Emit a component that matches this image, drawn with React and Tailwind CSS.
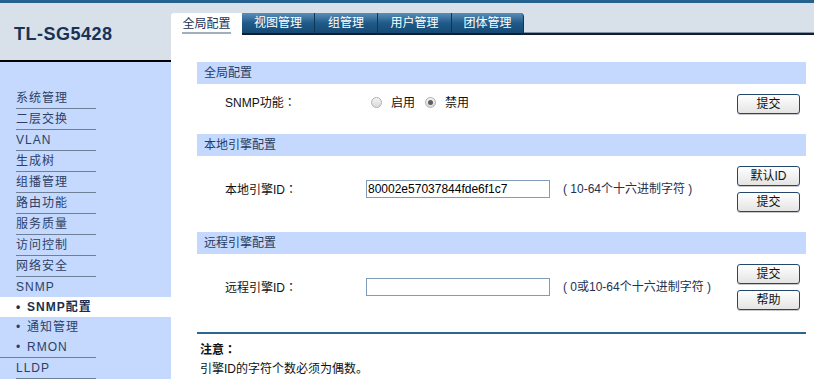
const FONT = "font-['Liberation_Sans','Noto_Sans_CJK_SC',sans-serif]"

const menu = [
  { label: '系统管理' },
  { label: '二层交换' },
  { label: 'VLAN' },
  { label: '生成树' },
  { label: '组播管理' },
  { label: '路由功能' },
  { label: '服务质量' },
  { label: '访问控制' },
  { label: '网络安全' },
  { label: 'SNMP', noLine: true },
  { label: 'SNMP配置', sub: true, active: true },
  { label: '通知管理', sub: true },
  { label: 'RMON', sub: true, line: true },
  { label: 'LLDP' },
]

const tabs = [
  { label: '视图管理', w: 'w-[73px]' },
  { label: '组管理', w: 'w-[63px]' },
  { label: '用户管理', w: 'w-[74px]' },
  { label: '团体管理', w: 'w-[72px] rounded-tr-[4px]' },
]

function Button({ children }) {
  return (
    <button className="w-[63px] h-[20px] border border-[#24476d] rounded-[3px] bg-linear-to-b from-white to-[#e4e4e4] text-[12px] leading-[18px] text-[#111] shadow-[0_1px_0_#c8c8c8]">
      {children}
    </button>
  )
}

function Radio({ checked }) {
  return (
    <span className="w-[11px] h-[11px] rounded-full border border-[#b0b0b0] bg-linear-to-b from-[#f4f4f4] to-[#dadada] flex items-center justify-center">
      {checked && <span className="w-[5px] h-[5px] rounded-full bg-[#5e5e5e]" />}
    </span>
  )
}

// full-width colon centred, as in the reference
function Colon() {
  return <span className="font-['Noto_Sans_CJK_TC',sans-serif]">：</span>
}

function SectionBar({ title }) {
  return (
    <div className="h-[22px] bg-[#c4d9fd] pl-[7px] text-[12px] leading-[22px] text-[#2b3c5e]">
      {title}
    </div>
  )
}

function SidebarItem({ item }) {
  if (item.sub) {
    return (
      <div
        className={`h-[20px] flex items-center pl-[16px] text-[12px] tracking-[1px] ${
          item.active ? 'bg-white font-bold text-[#1c2e4f]' : 'text-[#2e3f66]'
        }`}
      >
        <span className="w-[80px] flex items-center">
          <span className="w-[11px]">•</span>
          <span>{item.label}</span>
        </span>
      </div>
    )
  }
  return (
    <div className="pl-[16px]">
      <div
        className={`w-[80px] h-[20px] leading-[20px] text-[12px] tracking-[1px] text-[#2e3f66] ${
          item.noLine ? '' : 'box-content border-b border-[#6e7f98]'
        }`}
      >
        {item.label}
      </div>
    </div>
  )
}

export default function App() {
  return (
    <div className={`w-[814px] h-[379px] overflow-hidden flex flex-col bg-white ${FONT}`}>
      <div className="h-[3px] bg-[#25618f]" />
      <div className="flex flex-1 min-h-0">
        {/* sidebar */}
        <aside className="w-[171px] flex flex-col">
          <div className="h-[54px] bg-[#d8e0ea] flex items-center pl-[14px] pt-[6px] border-b-2 border-black box-content">
            <span className="text-[18px] font-bold tracking-[0.5px] text-[#1a3256]">TL-SG5428</span>
          </div>
          <div className="flex-1 bg-[#c4d9fd] pt-[26px]">
            {menu.map((m) => (
              <div key={m.label} className={m.line ? 'border-b border-[#6e7f98] w-[96px] box-content' : ''}>
                <SidebarItem item={m} />
              </div>
            ))}
          </div>
        </aside>

        {/* main */}
        <main className="flex-1 flex flex-col">
          <div className="h-[34px] bg-[#d8e0ea] flex items-end">
            <div className="w-[71px] h-[22px] bg-white rounded-tl-[3px] flex justify-center">
              <span className="mt-[4px] h-[17px] text-[12px] leading-[14px] text-[#1c3558] border-b-2 border-[#a4afbd]">全局配置</span>
            </div>
            {tabs.map((t) => (
              <div
                key={t.label}
                className={`${t.w} h-[22px] bg-linear-to-b from-[#5a8fba] via-[#1f5a88] to-[#164a74] border-r border-[#0f3658] border-b-2 border-b-[#0f1f2f] flex items-center justify-center text-[12px] text-white`}
              >
                {t.label}
              </div>
            ))}
            <div className="flex-1 h-[3px] border-t border-[#8594a5] bg-[#0f1f2f]" />
          </div>

          <div className="flex-1 pl-[26px] pr-[8px] pt-[27px] text-[12px] leading-[16px] text-[#111]">
            <SectionBar title="全局配置" />
            <div className="flex items-center pt-[10px] pb-[20px]">
              <div className="w-[169px] pl-[28px] pb-[3px]">SNMP功能<Colon /></div>
              <div className="flex items-center pl-[5px] pb-[3px] flex-1">
                <Radio />
                <span className="ml-[9px]">启用</span>
                <span className="ml-[10px]"><Radio checked /></span>
                <span className="ml-[9px]">禁用</span>
              </div>
              <Button>提交</Button>
              <div className="w-[6px]" />
            </div>

            <SectionBar title="本地引擎配置" />
            <div className="flex items-center pt-[10px] pb-[20px]">
              <div className="w-[169px] pl-[28px]">本地引擎ID<Colon /></div>
              <div className="w-[197px]">
                <input
                  readOnly
                  value="80002e57037844fde6f1c7"
                  className="w-[184px] h-[18px] border border-[#7f9cba] px-[1px] text-[12px] text-black outline-none"
                />
              </div>
              <div className="flex-1 text-[#1e3150]">( 10-64个十六进制字符 )</div>
              <div className="flex flex-col gap-[6px]">
                <Button>默认ID</Button>
                <Button>提交</Button>
              </div>
              <div className="w-[6px]" />
            </div>

            <SectionBar title="远程引擎配置" />
            <div className="flex items-center pt-[10px] pb-[22px]">
              <div className="w-[169px] pl-[28px]">远程引擎ID<Colon /></div>
              <div className="w-[197px]">
                <input
                  readOnly
                  value=""
                  className="w-[184px] h-[18px] border border-[#7f9cba] px-[1px] text-[12px] text-black outline-none"
                />
              </div>
              <div className="flex-1 text-[#1e3150]">( 0或10-64个十六进制字符 )</div>
              <div className="flex flex-col gap-[6px]">
                <Button>提交</Button>
                <Button>帮助</Button>
              </div>
              <div className="w-[6px]" />
            </div>

            <div className="border-t-2 border-[#2b6592] pl-[3px] pt-[5px]">
              <div className="font-bold leading-[19px]">注意<Colon /></div>
              <div className="leading-[19px]">引擎ID的字符个数必须为偶数。</div>
            </div>
          </div>
        </main>
      </div>
    </div>
  )
}
